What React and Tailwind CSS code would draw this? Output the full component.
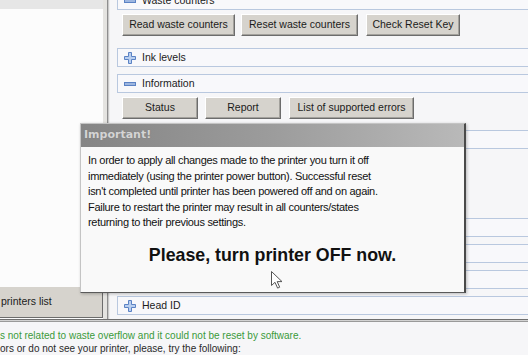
import React from "react";

const ui = "font-['Liberation_Sans',Arial,sans-serif]";

function PlusIcon() {
  return (
    <svg width="12" height="12" viewBox="0 0 12 12" className="shrink-0">
      <path
        d="M4.5 0.5h3v4h4v3h-4v4h-3v-4h-4v-3h4z"
        fill="#b9cff0"
        stroke="#5b82c4"
        strokeWidth="1"
      />
    </svg>
  );
}

function MinusIcon() {
  return (
    <svg width="12" height="12" viewBox="0 0 12 12" className="shrink-0">
      <rect x="0.5" y="4.5" width="11" height="3" fill="#9db6e0" stroke="#5b82c4" />
    </svg>
  );
}

function Section({ title, open, className = "" }) {
  return (
    <div
      className={`h-[19px] -mr-4 border border-[#b9c8df] bg-[#f8f8fb] flex items-center pl-[6px] gap-[6px] text-[10.5px] text-[#1b1b1b] ${className}`}
    >
      {open ? <MinusIcon /> : <PlusIcon />}
      {title && <span>{title}</span>}
    </div>
  );
}

function Btn({ children, w }) {
  return (
    <button
      className={`${w} h-[22px] bg-[#d6d3cd] border border-t-white border-l-white border-r-[#6c6c6c] border-b-[#6c6c6c] shadow-[inset_-1px_-1px_0_#a3a19c] text-[10.5px] text-[#1b1b1b] flex items-center justify-center`}
    >
      {children}
    </button>
  );
}

export default function App() {
  return (
    <div className={`w-[528px] h-[355px] overflow-hidden relative bg-[#f6f6f8] ${ui}`}>
      {/* top area: printer list + settings panel */}
      <div className="flex h-[319px] overflow-hidden">
        <div className="w-[103px] flex flex-col bg-[#fcfcfc]">
          <div className="h-[9px] bg-[#e6e6e6]" />
          <div className="flex-1" />
          <div className="h-[31px] mb-[1px] bg-[#d6d3cd] border-b border-r border-[#6c6c6c] flex items-center pl-[1px] text-[10.5px] text-[#1b1b1b] whitespace-nowrap">
            printers list
          </div>
        </div>
        <div className="w-[4px] bg-[#e4e3e0]" />
        <div className="w-[1px] bg-[#8e8e8e]" />
        <div className="w-[1px] bg-[#c9c9c9]" />
        <div className="w-[1px] bg-[#ededed]" />

        <div className="flex-1 flex flex-col pl-[7px] -mt-[9px]">
          <Section title="Waste counters" open />
          <div className="flex mt-[4px] pl-[5px]">
            <Btn w="w-[113px]">Read waste counters</Btn>
            <div className="w-[6px]" />
            <Btn w="w-[117px]">Reset waste counters</Btn>
            <div className="w-[8px]" />
            <Btn w="w-[94px]">Check Reset Key</Btn>
          </div>
          <Section title="Ink levels" className="mt-[12px]" />
          <Section title="Information" open className="mt-[7px]" />
          <div className="flex mt-[4px] pl-[5px]">
            <Btn w="w-[76px]">Status</Btn>
            <div className="w-[7px]" />
            <Btn w="w-[76px]">Report</Btn>
            <div className="w-[8px]" />
            <Btn w="w-[125px]">List of supported errors</Btn>
          </div>
          {/* sections hidden behind the dialog */}
          <Section open className="mt-[11px]" />
          <div className="h-[69px]" />
          <Section />
          <Section className="mt-[7px]" />
          <Section className="mt-[7px]" />
          <Section title="Head ID" className="mt-[7px]" />
        </div>
      </div>

      {/* separator */}
      <div className="h-[1px] bg-[#6e6e6e]" />
      <div className="h-[1px] bg-[#d2d2d2]" />
      <div className="h-[1px] bg-[#9a9a9a]" />

      {/* status text */}
      <div className="pt-[7px] text-[10px] leading-[13px] whitespace-nowrap">
        <div className="text-[#3a9a3a]">
          s not related to waste overflow and it could not be reset by software.
        </div>
        <div className="text-[#2a2a2a]">
          ors or do not see your printer, please, try the following:
        </div>
      </div>

      {/* dialog */}
      <div className="absolute left-[80px] top-[123px] w-[386px] h-[170px] flex flex-col border-t border-l border-[#c4c4c4] border-r-2 border-r-[#4a4a4a] border-b border-b-[#5a5a5a] shadow-[1px_1px_3px_rgba(0,0,0,0.25)]">
        <div className="h-[23px] bg-gradient-to-r from-[#858585] via-[#9c9c9c] to-[#b9b9b9] flex items-center pl-[3px] font-['DejaVu_Sans',sans-serif] font-bold text-[11px] text-[#d4d4d4] [text-shadow:0_0_1px_#7a7a7a]">
          Important!
        </div>
        <div className="flex-1 bg-[#f9f9f9] px-[7px] pt-[6px] font-['Liberation_Sans',Arial,sans-serif] text-[#111]">
          <p className="text-[11px] tracking-[-0.3px] leading-[15.5px] whitespace-nowrap">
            In order to apply all changes made to the printer you turn it off
            <br />
            immediately (using the printer power button). Successful reset
            <br />
            isn't completed until printer has been powered off and on again.
            <br />
            Failure to restart the printer may result in all counters/states
            <br />
            returning to their previous settings.
          </p>
          <p className="mt-[13px] text-center font-bold text-[17.8px] leading-[22px]">
            Please, turn printer OFF now.
          </p>
        </div>
      </div>

      {/* mouse cursor */}
      <svg
        className="absolute left-[271px] top-[271px]"
        width="12"
        height="18"
        viewBox="0 0 12 18"
      >
        <path
          d="M0.5 0.5v14l3.5-3.2 2.6 5.8 2.1-0.9-2.5-5.6h4.8z"
          fill="#fff"
          stroke="#555"
          strokeWidth="1"
          strokeLinejoin="round"
        />
      </svg>
    </div>
  );
}
